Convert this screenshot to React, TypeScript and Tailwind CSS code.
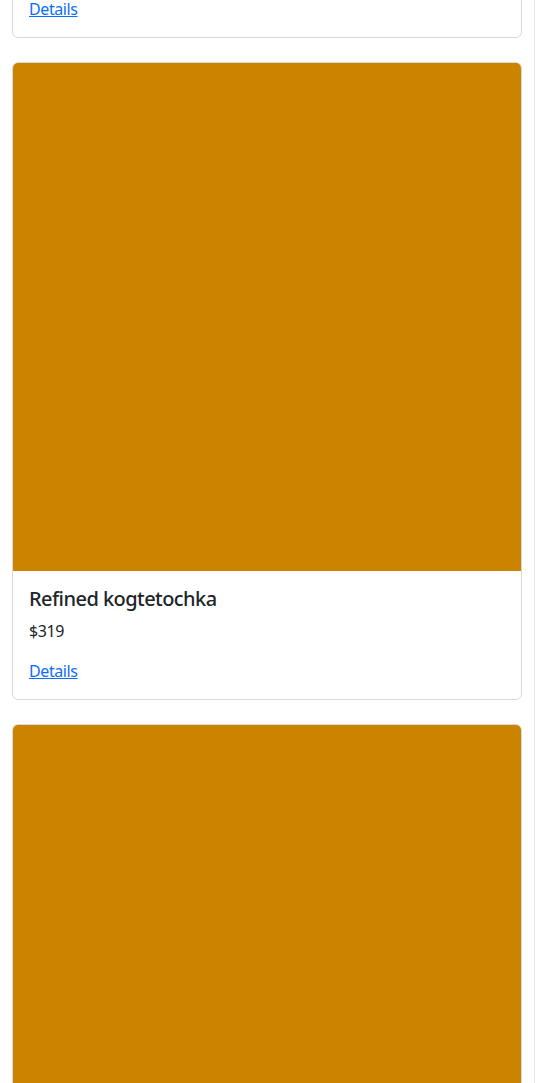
const products = [
  { name: 'Handmade kogtetochka', price: 245 },
  { name: 'Refined kogtetochka', price: 319 },
  { name: 'Sleek kogtetochka', price: 188 },
];

function ProductCard({ name, price }: { name: string; price: number }) {
  return (
    <div className="mb-6 flex flex-col rounded-md border border-[#d9d9d9] bg-white overflow-hidden">
      <div className="aspect-square w-full bg-[#cc8400]" />
      <div className="p-4">
        <h5 className="mb-2 text-[20px] font-medium leading-[24px] tracking-[-0.55px] text-[#212529]">
          {name}
        </h5>
        <p className="mb-4 text-base leading-6 tracking-[-0.4px] text-[#212529]">${price}</p>
        <a href="#" className="text-base leading-6 tracking-[-0.4px] text-[#0d6efd] underline">
          Details
        </a>
      </div>
    </div>
  );
}

export default function App() {
  return (
    <div
      className="flex h-[1083px] overflow-hidden bg-white"
      style={{ fontFamily: '"Segoe UI", "Noto Sans", "Open Sans", sans-serif' }}
    >
      <div className="w-[534px] shrink-0 pl-3 pr-3">
        <div className="-mt-[600px]">
          {products.map((p) => (
            <ProductCard key={p.name} {...p} />
          ))}
        </div>
      </div>
      <div className="w-px bg-[#e6e6e6]" />
    </div>
  );
}
